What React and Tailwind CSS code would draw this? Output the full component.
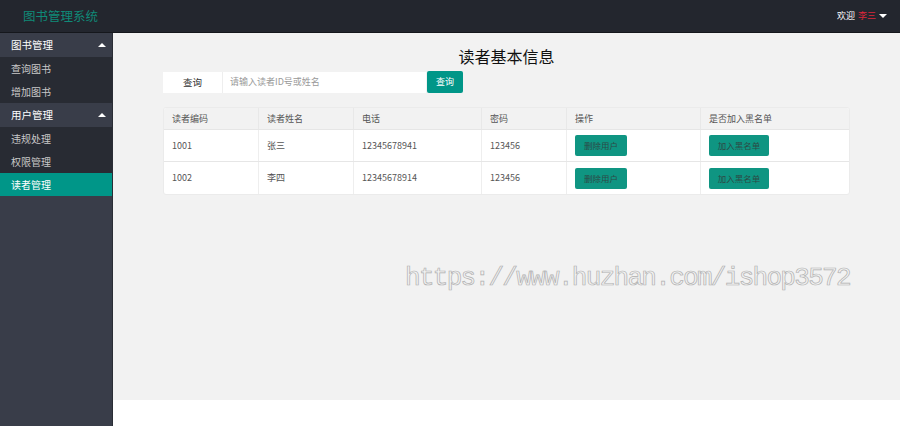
import React from 'react';

const font = { fontFamily: '"Noto Sans CJK SC", "Liberation Sans", sans-serif' };

const rows = [
  { id: '1001', name: '张三', phone: '12345678941', pwd: '123456' },
  { id: '1002', name: '李四', phone: '12345678914', pwd: '123456' },
];

function Caret({ up }) {
  return (
    <span
      className={`inline-block w-0 h-0 border-l-[4px] border-r-[4px] border-l-transparent border-r-transparent ${
        up ? 'border-b-[4px] border-b-white' : 'border-t-[4px] border-t-white'
      }`}
    />
  );
}

function Group({ title, items, active }) {
  return (
    <div>
      <div className="h-[24px] flex items-center justify-between pl-[11px] pr-[6px] bg-[#393d49] text-[10.5px] text-white">
        <span>{title}</span>
        <Caret up />
      </div>
      {items.map((it) => (
        <div
          key={it}
          className={`h-[23px] flex items-center pl-[11px] text-[10px] ${
            it === active ? 'bg-[#009688] text-white' : 'bg-[#282b33] text-[#c8c8c8]'
          }`}
        >
          {it}
        </div>
      ))}
    </div>
  );
}

export default function App() {
  const cols = ['w-[95px]', 'w-[95px]', 'w-[128px]', 'w-[85px]', 'w-[134px]', 'flex-1'];
  const heads = ['读者编码', '读者姓名', '电话', '密码', '操作', '是否加入黑名单'];

  return (
    <div className="w-[900px] h-[426px] flex flex-col bg-white overflow-hidden" style={font}>
      {/* top bar */}
      <div className="h-[33px] shrink-0 bg-[#23262e] flex items-center justify-between pl-[23px] pr-[13px] border-b border-[#15171c]">
        <span className="text-[12.5px] text-[#0f8a78]">图书管理系统</span>
        <div className="flex items-center gap-[3px] text-[9px] text-white">
          <span>欢迎</span>
          <span className="text-[#d9263a]">李三</span>
          <Caret />
        </div>
      </div>

      <div className="flex flex-1 min-h-0">
        {/* sidebar */}
        <div className="w-[113px] shrink-0 bg-[#393d49] border-r border-[#2a2d35]">
          <Group title="图书管理" items={['查询图书', '增加图书']} />
          <Group title="用户管理" items={['违规处理', '权限管理', '读者管理']} active="读者管理" />
        </div>

        {/* main */}
        <div className="flex-1 flex flex-col">
          <div className="h-[367px] bg-[#f2f2f2] relative pl-[50px] pr-[50px]">
            <h1 className="text-center text-[16px] text-[#111] pt-[12px] leading-[22px]">读者基本信息</h1>
            <div className="flex items-center mt-[4px]">
              <div className="w-[60px] h-[21px] bg-white flex items-center justify-center text-[9.5px] text-[#333] border-r border-[#eee]">
                查询
              </div>
              <div className="w-[203px] h-[21px] bg-white flex items-center pl-[7px] text-[9px] text-[#999]">
                请输入读者ID号或姓名
              </div>
              <button className="ml-[1px] w-[36px] h-[22px] bg-[#009688] text-white text-[9px] rounded-[2px]">
                查询
              </button>
            </div>

            <div className="mt-[14px] w-[687px] bg-white rounded-[3px] border border-[#ebebeb] overflow-hidden text-[9px] text-[#555]">
              <div className="flex h-[22px] bg-[#f2f2f2] border-b border-[#e6e6e6]">
                {heads.map((h, i) => (
                  <div
                    key={h}
                    className={`${cols[i]} flex items-center pl-[8px] ${i < 5 ? 'border-r border-[#e8e8e8]' : ''}`}
                  >
                    {h}
                  </div>
                ))}
              </div>
              {rows.map((r, ri) => (
                <div key={r.id} className={`flex h-[32px] ${ri === 0 ? 'border-b border-[#e6e6e6]' : ''}`}>
                  <div className={`${cols[0]} flex items-center pl-[8px] border-r border-[#eee]`}>{r.id}</div>
                  <div className={`${cols[1]} flex items-center pl-[8px] border-r border-[#eee]`}>{r.name}</div>
                  <div className={`${cols[2]} flex items-center pl-[8px] border-r border-[#eee]`}>{r.phone}</div>
                  <div className={`${cols[3]} flex items-center pl-[8px] border-r border-[#eee]`}>{r.pwd}</div>
                  <div className={`${cols[4]} flex items-center pl-[8px] border-r border-[#eee]`}>
                    <button className="w-[52px] h-[21px] bg-[#0f9582] text-[#2d4a46] text-[8.5px] rounded-[2px]">删除用户</button>
                  </div>
                  <div className={`${cols[5]} flex items-center pl-[8px]`}>
                    <button className="w-[60px] h-[21px] bg-[#0f9582] text-[#2d4a46] text-[8.5px] rounded-[2px]">加入黑名单</button>
                  </div>
                </div>
              ))}
            </div>

            {/* watermark */}
            <div
              className="absolute left-[292px] top-[232px] text-[26px] leading-none text-transparent [-webkit-text-stroke:0.7px_#b0b0b0] whitespace-nowrap tracking-[-1.7px]"
              style={{ fontFamily: '"Liberation Mono", monospace' }}
            >
              https://www.huzhan.com/ishop3572
            </div>
          </div>
          <div className="flex-1 bg-white" />
        </div>
      </div>
    </div>
  );
}
